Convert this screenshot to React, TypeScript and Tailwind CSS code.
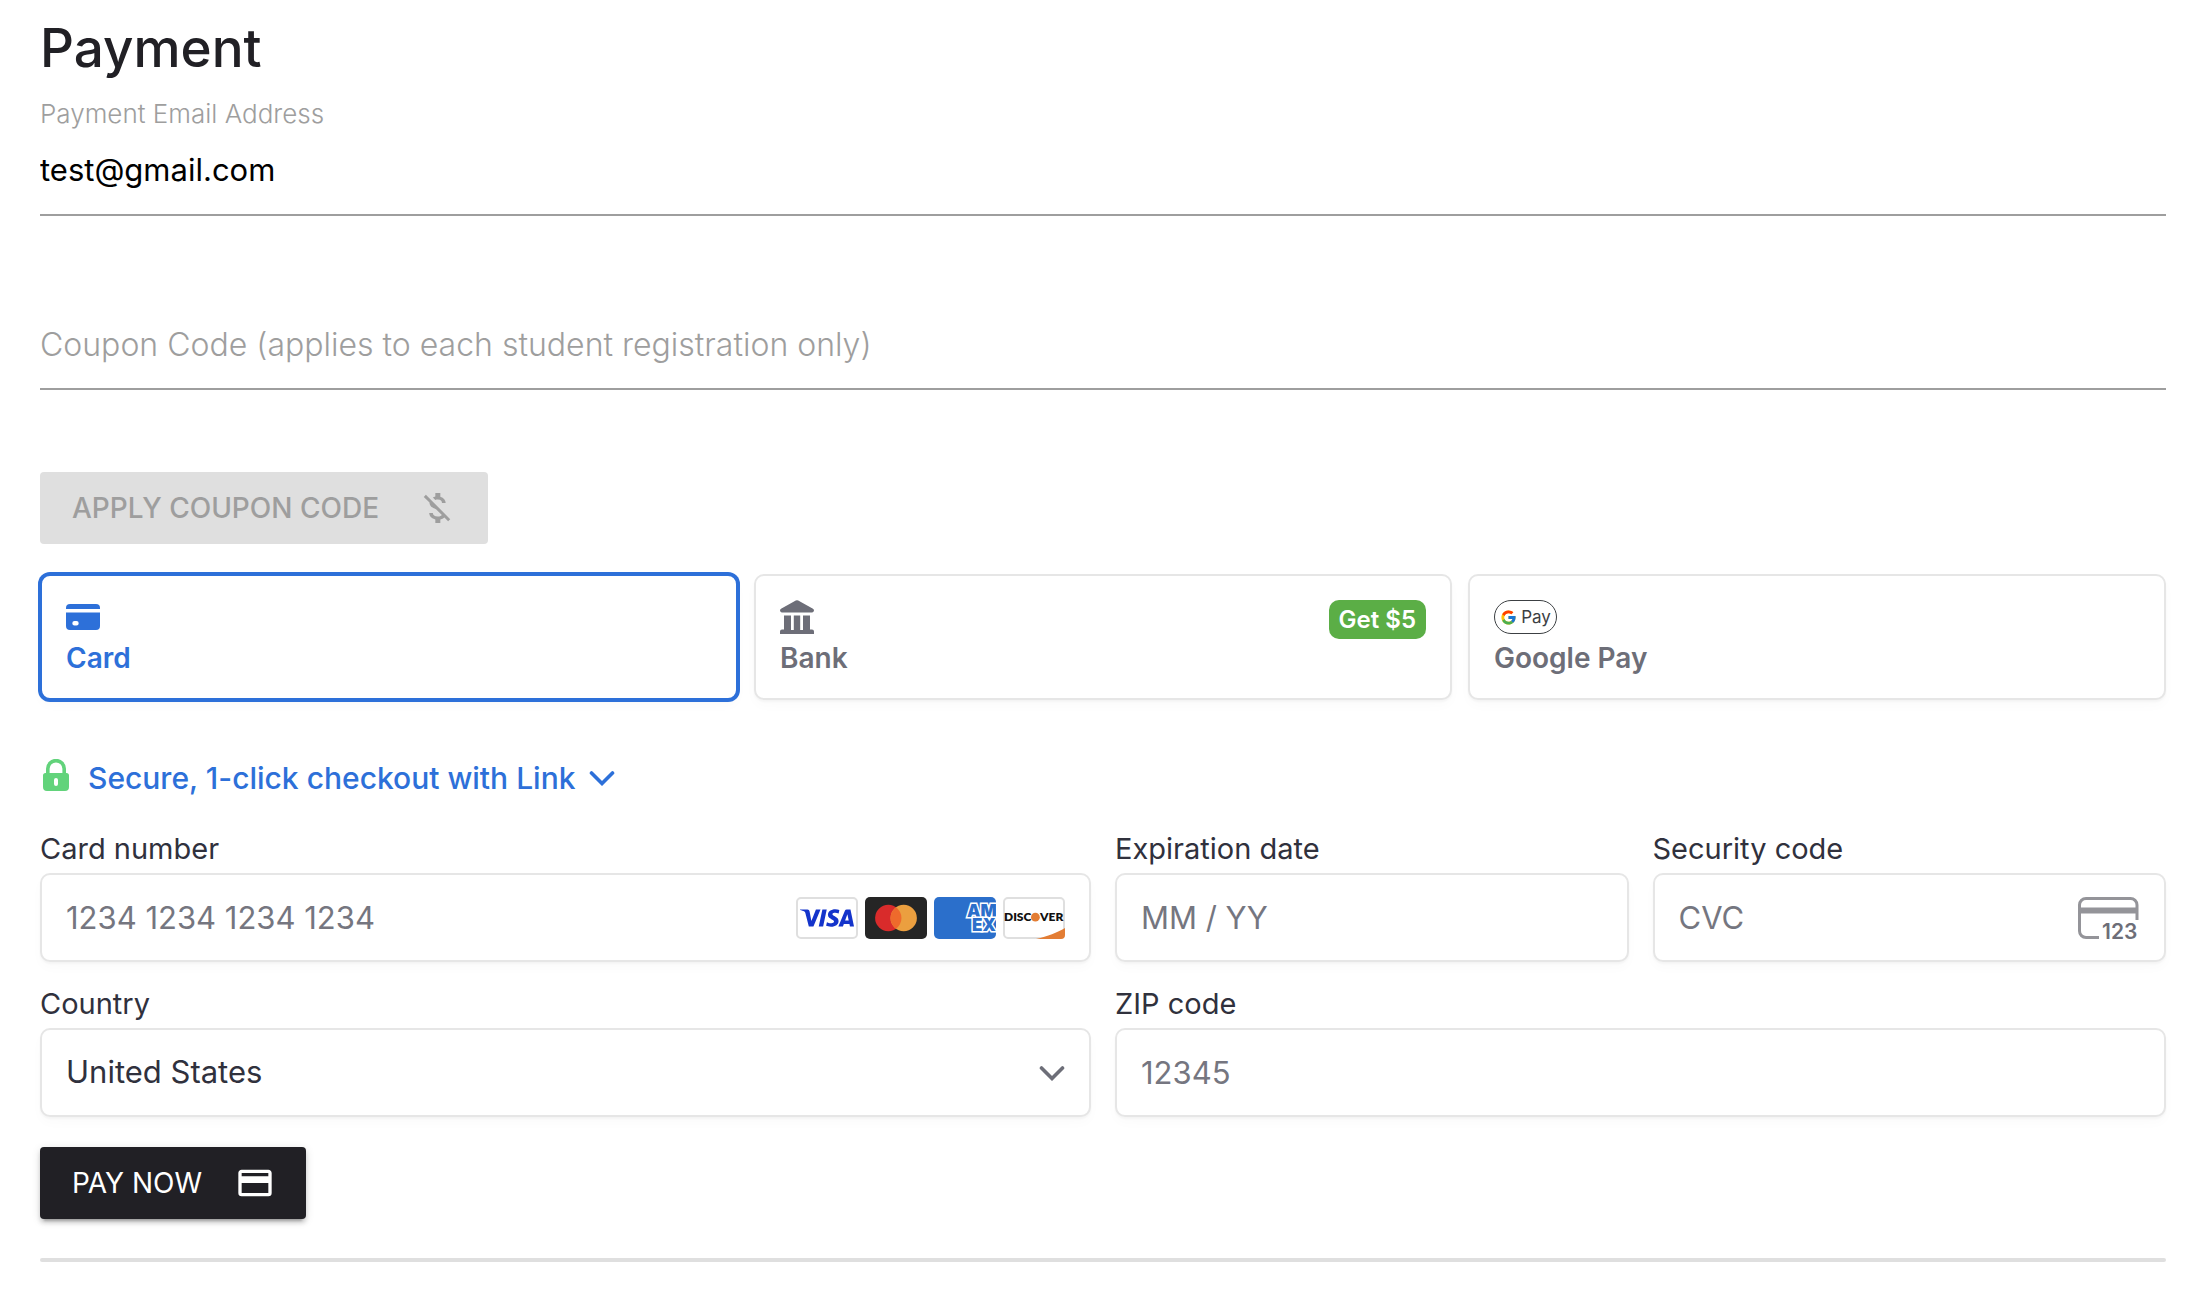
import React, { useState } from "react";
import { FcGoogle } from "react-icons/fc";
import { SiVisa } from "react-icons/si";

const fieldBox =
  "h-[89px] w-full rounded-[10px] border-2 border-[#e6e6e6] bg-white px-6 text-[31px] text-[#30313d] shadow-[0_2px_2px_rgba(0,0,0,0.03),0_6px_12px_rgba(0,0,0,0.02)] outline-none placeholder:text-[#757680] placeholder:opacity-100";
const lineInput =
  "h-[76px] w-full border-b-2 border-[#9e9e9e] bg-transparent outline-none placeholder:text-[#9e9e9e] placeholder:opacity-100";
const tabBase =
  "relative flex items-start justify-between rounded-[10px] border-2 bg-white p-6 text-left";

function CardIcon() {
  return (
    <svg width="34" height="34" viewBox="0 0 34 34" fill="currentColor" aria-hidden="true">
      <path d="M4 4h26a4 4 0 0 1 4 4v1H0V8a4 4 0 0 1 4-4Z" />
      <path
        fillRule="evenodd"
        d="M0 12.5h34V26a4 4 0 0 1-4 4H4a4 4 0 0 1-4-4V12.5ZM8.5 21a2.2 2.2 0 0 0 0 4.4h2a2.2 2.2 0 0 0 0-4.4h-2Z"
      />
    </svg>
  );
}

function BankIcon() {
  return (
    <svg width="34" height="34" viewBox="0 0 34 34" fill="currentColor" aria-hidden="true">
      <path d="M15.8.6a2.4 2.4 0 0 1 2.4 0L33 8.8c.6.3 1 .9 1 1.5 0 1.2-.8 2.2-2 2.2H2c-1.2 0-2-1-2-2.2 0-.6.4-1.200 1-1.500L15.800.6Z" />
      <path d="M4 15.500h7V30h2.800V15.500h6.400V30H23V15.500h7V29.600h2a2 2 0 0 1 2 2V34H0v-2.400a2 2 0 0 1 2-2h2V15.500Z" />
    </svg>
  );
}

function GooglePayIcon() {
  return (
    <span className="flex h-[34px] w-[63px] items-center justify-center gap-1 rounded-full border border-[#3c4043]">
      <FcGoogle size={17} aria-hidden="true" />
      <span className="font-[Inter,sans-serif] text-[17px] leading-none text-[#3c4043]">Pay</span>
    </span>
  );
}

function LockIcon() {
  return (
    <svg width="26" height="32" viewBox="0 0 26 32" aria-hidden="true">
      <path d="M4.800 16V9.800a8.200 8.200 0 0 1 16.400 0V16" fill="none" stroke="#62d37b" strokeWidth="3.600" />
      <path
        fill="#62d37b"
        fillRule="evenodd"
        d="M2.500 14h21A2.500 2.500 0 0 1 26 16.500V28a4 4 0 0 1-4 4H4a4 4 0 0 1-4-4V16.500A2.500 2.500 0 0 1 2.500 14ZM13 19a2 2 0 0 0-2 2v4a2 2 0 0 0 4 0v-4a2 2 0 0 0-2-2Z"
      />
    </svg>
  );
}

function Chevron() {
  return (
    <svg width="26" height="16" viewBox="0 0 26 16" fill="none" aria-hidden="true">
      <path d="M2.500 3 13 13.500 23.500 3" stroke="currentColor" strokeWidth="3.600" strokeLinecap="round" />
    </svg>
  );
}

function CardBrands() {
  return (
    <div className="pointer-events-none absolute inset-y-0 right-[26px] flex items-center gap-[7px]">
      <span className="flex h-[42px] w-[62px] items-center justify-center rounded-[5px] border-2 border-[#dfdfdf] bg-white text-[#1434cb]">
        <SiVisa size={54} aria-label="Visa" />
      </span>
      <svg width="62" height="42" viewBox="0 0 62 42" role="img" aria-label="Mastercard">
        <rect width="62" height="42" rx="5" fill="#252525" />
        <circle cx="23.300" cy="21" r="13.200" fill="#d92b2b" />
        <circle cx="38.700" cy="21" r="13.200" fill="#eb9f3f" />
        <path d="M31 10.300a13.200 13.200 0 0 1 0 21.400 13.200 13.200 0 0 1 0-21.400Z" fill="#ee6a2c" />
      </svg>
      <svg width="62" height="42" viewBox="0 0 62 42" role="img" aria-label="American Express">
        <defs>
          <clipPath id="amex">
            <rect width="62" height="42" rx="5" />
          </clipPath>
        </defs>
        <g clipPath="url(#amex)">
          <rect width="62" height="42" fill="#2b6fcb" />
          <g
            fill="#2b6fcb"
            stroke="#fff"
            strokeWidth="3"
            paintOrder="stroke"
            fontFamily="Inter, sans-serif"
            fontWeight="900"
            fontSize="17"
          >
            <text x="33" y="19.500">AM</text>
            <text x="38" y="34">EX</text>
          </g>
        </g>
      </svg>
      <svg width="62" height="42" viewBox="0 0 62 42" role="img" aria-label="Discover">
        <rect x="1" y="1" width="60" height="40" rx="4" fill="#fff" stroke="#dfdfdf" strokeWidth="2" />
        <path d="M62 31v7a4 4 0 0 1-4 4H33c12-2.500 21-6.500 29-11Z" fill="#e37d34" />
        <g fill="#111" fontFamily="Lato, sans-serif" fontWeight="800" fontSize="12">
          <text x="1" y="24.300">DISC</text>
          <text x="37" y="24.300">VER</text>
        </g>
        <circle cx="32.400" cy="20.200" r="4.400" fill="#e37d34" />
      </svg>
    </div>
  );
}

function CvcIcon() {
  return (
    <svg
      className="pointer-events-none absolute top-6 right-[27px] overflow-visible"
      width="61"
      height="42"
      viewBox="0 0 61 42"
      aria-hidden="true"
    >
      <path
        d="M21 40.500H8A6.500 6.500 0 0 1 1.500 34V8A6.500 6.500 0 0 1 8 1.500h44.500A6.500 6.500 0 0 1 59 8v15"
        fill="none"
        stroke="#949499"
        strokeWidth="3"
      />
      <rect x="1.500" y="10.500" width="57.500" height="6" fill="#949499" />
      <text x="24" y="41.500" fill="#6d6e78" fontFamily="Inter, sans-serif" fontWeight="600" fontSize="21">
        123
      </text>
    </svg>
  );
}

function Field({
  id,
  label,
  className,
  children,
}: {
  id: string;
  label: string;
  className?: string;
  children: React.ReactNode;
}) {
  return (
    <div className={className}>
      <label htmlFor={id} className="block text-[29px] leading-8 text-[#30313d]">
        {label}
      </label>
      <div className="relative mt-2">{children}</div>
    </div>
  );
}

const methods = [
  { id: "card", label: "Card", icon: <CardIcon /> },
  { id: "bank", label: "Bank", icon: <BankIcon />, badge: "Get $5" },
  { id: "gpay", label: "Google Pay", icon: <GooglePayIcon /> },
];

export default function App() {
  const [method, setMethod] = useState("card");
  return (
    <main className="bg-white pt-4 pr-7 pb-8 pl-10 font-[Inter,sans-serif]">
      <h1 className="text-[53px] leading-[64px] font-medium text-[#212025]">Payment</h1>

      <label htmlFor="email" className="mt-[18px] block text-[26px] leading-8 font-light text-[#9e9e9e]">
        Payment Email Address
      </label>
      <input
        id="email"
        type="email"
        defaultValue="test@gmail.com"
        className={`${lineInput} mt-[10px] block pb-4 text-[31px] text-black`}
      />

      <input
        type="text"
        aria-label="Coupon Code"
        placeholder="Coupon Code (applies to each student registration only)"
        className={`${lineInput} mt-[98px] block pb-[14px] text-[32px] font-light`}
      />

      <button
        type="button"
        disabled
        className="mt-[82px] flex h-[72px] w-[448px] items-center justify-between rounded bg-[#dfdfdf] pr-[31px] pl-8 text-[28px] font-medium text-[#9e9e9e]"
      >
        APPLY COUPON CODE
        <svg width="40" height="40" viewBox="0 0 24 24" fill="currentColor" aria-hidden="true">
          <path d="M12.5,6.9C14.28,6.9 14.94,7.75 15,9H17.21C17.14,7.28 16.09,5.7 14,5.19V3H11V5.16C10.47,5.28 9.97,5.46 9.5,5.7L11,7.17C11.4,7 11.9,6.9 12.5,6.9M5.33,4.06L4.06,5.33L7.5,8.77C7.5,10.85 9.06,12 11.41,12.68L14.92,16.19C14.58,16.67 13.87,17.1 12.5,17.1C10.44,17.1 9.63,16.18 9.5,15H7.32C7.44,17.19 9.08,18.42 11,18.83V21H14V18.85C14.96,18.67 15.82,18.3 16.45,17.73L18.67,19.95L19.94,18.68L5.33,4.06Z" />
        </svg>
      </button>

      <div className="mt-[30px] grid grid-cols-3 gap-4">
        {methods.map((m) => (
          <button
            key={m.id}
            type="button"
            aria-pressed={method === m.id}
            onClick={() => setMethod(m.id)}
            className={`${tabBase} ${
              method === m.id
                ? "border-[#2d70d9] text-[#2d70d9] shadow-[0_0_0_2px_#2d70d9,0_2px_2px_rgba(0,0,0,0.03),0_6px_12px_rgba(0,0,0,0.02)]"
                : "border-[#e6e6e6] text-[#6d6e78] shadow-[0_2px_2px_rgba(0,0,0,0.03),0_6px_12px_rgba(0,0,0,0.02)]"
            }`}
          >
            <span className="flex flex-col gap-2">
              {m.icon}
              <span className="text-[28px] leading-8 font-semibold">{m.label}</span>
            </span>
            {m.badge && (
              <span className="rounded-[10px] bg-[#5bae46] px-[10px] text-2xl leading-[39px] font-semibold text-white">
                {m.badge}
              </span>
            )}
          </button>
        ))}
      </div>

      <button type="button" className="mt-[60px] flex h-9 items-center pl-[3px] text-[30px] font-medium text-[#2d70d9]">
        <span className="mb-1.5">
          <LockIcon />
        </span>
        <span className="mr-[14px] ml-[19px]">Secure, 1-click checkout with Link</span>
        <Chevron />
      </button>

      <div className="mt-[37px] grid grid-cols-4 gap-x-6 gap-y-[26px]">
        <Field id="number" label="Card number" className="col-span-2">
          <input id="number" inputMode="numeric" placeholder="1234 1234 1234 1234" className={fieldBox} />
          <CardBrands />
        </Field>
        <Field id="expiry" label="Expiration date">
          <input id="expiry" inputMode="numeric" placeholder="MM / YY" className={fieldBox} />
        </Field>
        <Field id="cvc" label="Security code">
          <input id="cvc" inputMode="numeric" placeholder="CVC" className={fieldBox} />
          <CvcIcon />
        </Field>
        <Field id="country" label="Country" className="col-span-2">
          <select id="country" defaultValue="US" className={`${fieldBox} appearance-none`}>
            <option value="US">United States</option>
          </select>
          <span className="pointer-events-none absolute inset-y-0 right-[26px] flex items-center text-[#6d6e78]">
            <Chevron />
          </span>
        </Field>
        <Field id="zip" label="ZIP code" className="col-span-2">
          <input id="zip" inputMode="numeric" placeholder="12345" className={fieldBox} />
        </Field>
      </div>

      <button
        type="button"
        className="mt-[30px] flex h-[72px] w-[266px] items-center justify-between rounded bg-[#212025] pr-[31px] pl-8 text-[28px] text-white shadow-[0_6px_2px_-4px_rgba(0,0,0,0.2),0_4px_4px_rgba(0,0,0,0.14),0_2px_10px_rgba(0,0,0,0.12)]"
      >
        PAY NOW
        <svg width="40" height="40" viewBox="0 0 24 24" fill="currentColor" aria-hidden="true">
          <path d="M20,8H4V6H20M20,18H4V12H20M20,4H4C2.89,4 2,4.89 2,6V18A2,2 0 0,0 4,20H20A2,2 0 0,0 22,18V6C22,4.89 21.1,4 20,4Z" />
        </svg>
      </button>

      <hr className="mt-[39px] h-1 rounded-full border-0 bg-[#dfdfdf]" />
    </main>
  );
}
